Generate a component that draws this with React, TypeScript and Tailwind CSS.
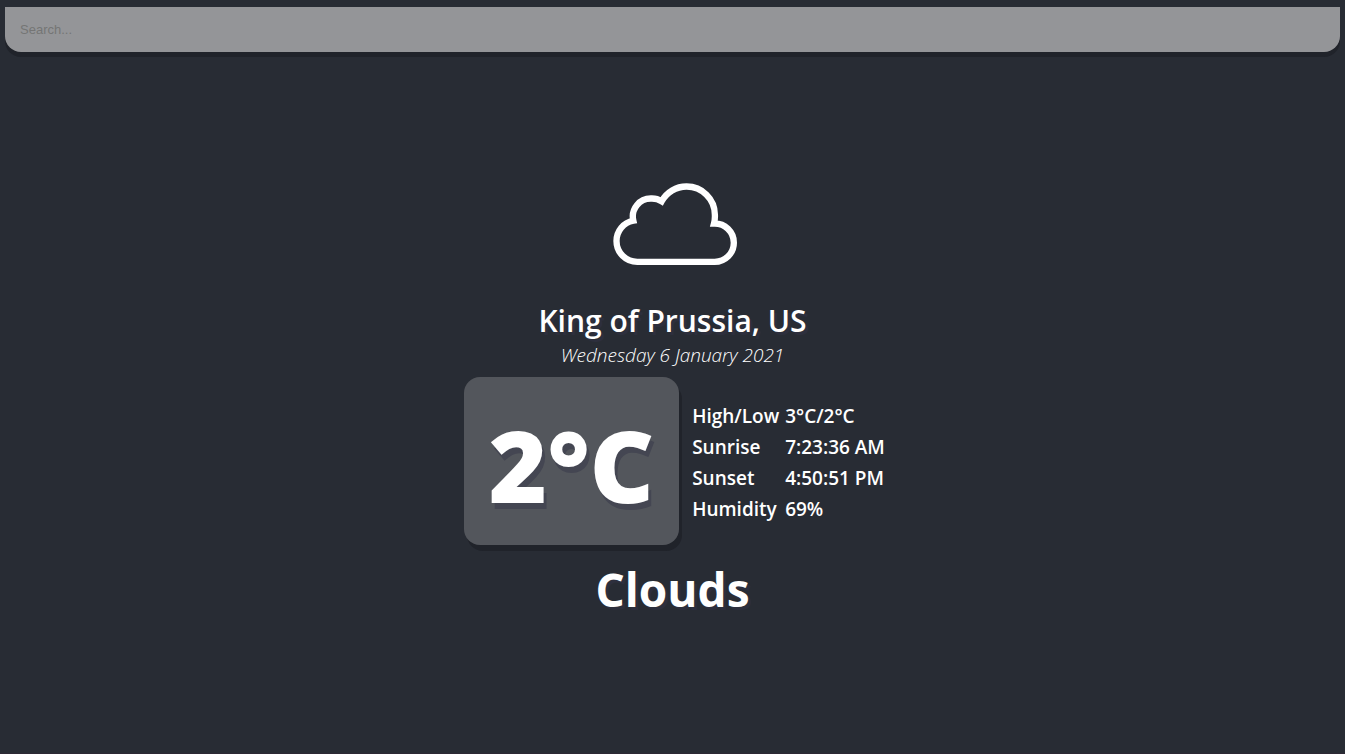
const details = [
  { label: "High/Low", value: "3°C/2°C" },
  { label: "Sunrise", value: "7:23:36 AM" },
  { label: "Sunset", value: "4:50:51 PM" },
  { label: "Humidity", value: "69%" },
];

function CloudIcon() {
  return (
    <svg viewBox="39 38 372 246" className="mt-[131px] ml-1 h-[82px] w-[124px]" fill="none" stroke="white" strokeWidth="19" strokeLinejoin="miter" aria-hidden="true">
      <path d="M112 274.500H344A57.500 57.500 0 0 0 401.500 217A57.500 57.500 0 0 0 342 159.500A84.500 84.500 0 0 0 344.500 132A84.500 84.500 0 0 0 260 48.500A84.500 84.500 0 0 0 185 93A54 54 0 0 0 154 84.500A54 54 0 0 0 100 151A62.500 62.500 0 0 0 49.500 212A62.500 62.500 0 0 0 112 274.500Z" />
    </svg>
  );
}

export default function App() {
  return (
    <div className="flex min-h-screen flex-col border-b border-[#2d2834] bg-[#282c34] px-[5px] pt-[7px] font-['Open_Sans','Noto_Sans',sans-serif] text-white">
      <input
        type="text"
        aria-label="Search"
        placeholder="Search..."
        className="block h-[45px] w-full rounded-b-2xl bg-[#949598] px-[15px] font-['Liberation_Sans',Arial,sans-serif] text-[13px] text-[#282c34] shadow-[0_5px_0_#20232a] outline-none placeholder:text-[#757575]"
      />
      <main className="flex flex-col items-center">
        <CloudIcon />
        <h1 className="mt-8 text-[30px] leading-[48px] font-semibold [text-shadow:3px_3px_rgba(50,50,70,0.5)]">King of Prussia, US</h1>
        <p className="text-[19px] leading-5 font-light italic">Wednesday 6 January 2021</p>
        <section className="mt-3 ml-1.5 flex items-center gap-[11px]">
          <div className="flex h-[168px] w-[215px] items-center justify-center rounded-2xl bg-[#53565c] pt-1.5 text-[100px] leading-none font-extrabold shadow-[3px_6px_#20232a] [text-shadow:3px_6px_#444652]">
            2°C
          </div>
          <table className="mt-1 border-separate border-spacing-0.5 text-left text-[19px] leading-[29px] font-semibold">
            <tbody>
              {details.map(({ label, value }) => (
                <tr key={label}>
                  <th scope="row" className="w-[91px] font-semibold">{label}</th>
                  <td>{value}</td>
                </tr>
              ))}
            </tbody>
          </table>
        </section>
        <p className="mt-3 text-[46px] leading-[64px] font-bold [text-shadow:3px_3px_rgba(50,50,70,0.5)]">Clouds</p>
      </main>
    </div>
  );
}
